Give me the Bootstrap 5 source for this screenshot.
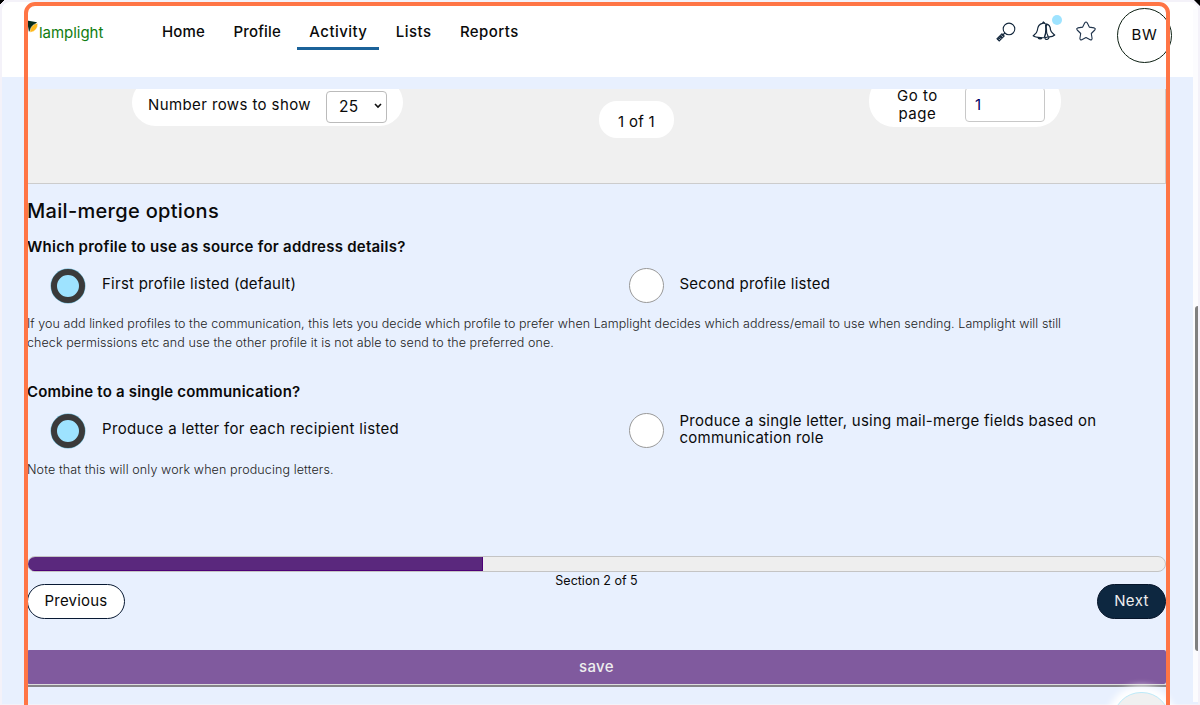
<!DOCTYPE html>
<html lang="en">
<head>
<meta charset="utf-8">
<meta name="viewport" content="width=device-width, initial-scale=1">
<title>Lamplight – Mail-merge options</title>
<link href="https://cdn.jsdelivr.net/npm/bootstrap@5.3.0/dist/css/bootstrap.min.css" rel="stylesheet">
<style>
html,body{height:100%;overflow:hidden}
body{font-family:Inter,"Open Sans",sans-serif;font-size:15px;line-height:17px;letter-spacing:.25px;color:#0a0a0a;background:linear-gradient(135deg,#000 3px,transparent 3.5px),linear-gradient(225deg,#000 4px,transparent 4.5px),#f4f2f9}
.shell{height:705px;padding:2px}
.app-window{height:702px;background:#e8f0fe;border-radius:8px 8px 0 0;overflow:hidden}
.topbar{height:75px;background:#fff}
.brand{margin-left:25px;width:123px;height:60px;color:#107c10;letter-spacing:-.04px;padding-top:1px}
.brand svg{margin:-9px -1px 0 0}
.topnav{gap:4.4px;padding-top:12px}
.topnav .nav-link{color:#0a0a0a;font-weight:500;padding:9px 12px 7px;height:36px;letter-spacing:.45px;border-bottom:3px solid transparent}
.topnav .nav-link.tight{letter-spacing:.17px}
.topnav .nav-link.active{border-color:#1b6299}
.tools{margin-right:26px}
.bell-wrap{margin:-1px 19px 0 16px;line-height:1}
.dot{position:absolute;width:10px;height:10px;border-radius:50%;background:#9ee3ff;right:-6px;top:-6px}
.avatar{width:55px;height:55px;margin:6px 0 0 20px;border:1.5px solid #0c1f12;letter-spacing:.6px;padding-bottom:3px}
.tools>svg,.bell-wrap{transform:translateY(-1px)}
.content{margin:12px 32px 0 25px}
.pager-panel{height:94.5px;margin-left:1px;background:#f0f0f0;border-bottom:1.5px solid #ccc;border-right:1px solid #ccc;overflow:hidden}
.pill{background:#fff;border-radius:25px}
.pill-rows{width:271px;height:47px;margin:-10px 0 0 104px;padding:8px 16px 0 16px;letter-spacing:.4px}
.pill-rows>span{margin-top:-5px}
.pill-count{width:75px;height:37px;margin:12px 0 0 196px;border-radius:18px;padding-top:3px;letter-spacing:.3px}
.pill-goto{width:192px;height:52px;margin:-14px 0 0 195px;padding:7px 16px 0 28px;letter-spacing:.5px;line-height:17.5px}
.rows-box{width:61px;height:32px;margin-top:1px;border:1px solid #bbb;border-radius:4px;padding:0 4px 2px 12px;background:#fff;font-size:15.5px}
.page-box{width:80px;height:35px;border:1.5px solid #c8c8c8;border-radius:4px;padding-left:9px;background:#fff;color:#000064}
h1{font-size:20px;line-height:24px;font-weight:500;letter-spacing:.31px;margin:15px 0 0}
h2{font-size:15px;line-height:18px;font-weight:600;letter-spacing:.25px;margin:0}
.q-one{margin-top:15px}
.q-two{margin-top:31px;letter-spacing:.19px}
.choices{margin-top:12px;padding-left:24px}
.choice{height:36px}
.choices>.choice+.choice{padding-left:20px}
.choice-text{margin:-4px 0 0 17px}
.q-wide{letter-spacing:.33px}
.ring{width:34px;height:34px;border-radius:50%;flex:none}
.ring.off{width:35px;height:35px;margin-right:-1px;border:1px solid #999;background:#fff}
.ring.on{border:6px solid #3a3a3a;background:#9ee3ff;box-shadow:0 0 0 .5px #69b7d3}
.hint{font-size:12.5px;line-height:19px;font-weight:300;letter-spacing:.055px;color:#222;white-space:nowrap}
.hint-one{margin-top:10px}
.hint-two{margin-top:11px;letter-spacing:.12px}
.hint-tail{letter-spacing:.09px}
.progress{height:16px;border-radius:8px;background:#eee;border:1px solid #c4c4c4;margin-top:77px}
.progress-bar{background:#5a287d;border-bottom:1px solid #4d0077;border-right:1px solid #4d0077}
.section-no{font-size:12.5px;line-height:12px;letter-spacing:0;height:12px;padding-top:3px}
.btn{font-size:15px;line-height:17px;height:35px;border-radius:18px;padding:0 0 1px;letter-spacing:.22px}
.btn-prev{width:98px;background:#fff;border:1.5px solid #081933;color:#0a0a0a}
.btn-next{width:69px;background:#0d2740;border:1px solid #06152a;color:#eee;letter-spacing:.4px}
.btn-save{height:34px;border-radius:2px;background:#805a9e;border:0;color:#eee;font-weight:500;letter-spacing:.37px;margin-top:31px;padding-top:1px}
.rule-under{height:3px;background:#858589;border-top:1px solid #ddd}
.scroll-track{position:absolute;right:2px;top:9px;width:5px;height:693px;background:#fcfcfe}
.scroll-thumb{position:absolute;right:0;top:297px;width:3px;height:345px;background:#808080;border-radius:3px 0 0 3px}
.fab{position:absolute;left:1113px;top:692px;width:57px;height:46px;border-radius:28px 28px 0 0;background:#f0f0f0;border:1.5px solid #bdeaf9;box-shadow:0 0 7px 6px #fff}
.outline-frame{position:absolute;left:24px;top:2px;width:1146px;height:720px;border:4px solid #ff7545;border-radius:11px;pointer-events:none}
</style>
</head>
<body>
<div class="shell position-relative overflow-hidden">
<div class="app-window d-flex flex-column">
  <header class="topbar d-flex align-items-start">
    <div class="brand d-flex align-items-center">
      <svg width="13" height="22" viewBox="0 0 13 22"><path d="M0 3.5L10 5.2 2 15z" fill="#062b1b"/><path d="M2.8 15.2C3.2 11 5.500 7 10.600 6.200c.8 4.200-2.800 9.200-7.800 9z" fill="#ffb81a" stroke="#fff" stroke-width=".5"/></svg>
      <span>lamplight</span>
    </div>
    <nav class="nav topnav flex-grow-1">
      <a class="nav-link tight" href="#">Home</a>
      <a class="nav-link tight" href="#">Profile</a>
      <a class="nav-link active" href="#">Activity</a>
      <a class="nav-link" href="#">Lists</a>
      <a class="nav-link" href="#">Reports</a>
    </nav>
    <div class="tools d-flex align-items-center">
      <svg width="20" height="20" viewBox="0 0 20 20" fill="none" stroke="#14283d" stroke-width="1.1"><circle cx="13" cy="6.900" r="5.800"/><path d="M8.800 11L6.800 13M6 11.800l2.200 2.200-5 5-2.200-2.200zM2.400 15.400l2.200 2.200M4 14l2 2M1.800 17.800l5.200-5"/></svg>
      <span class="position-relative bell-wrap">
        <svg width="24" height="21" viewBox="0 0 24 21" fill="none" stroke="#14283d" stroke-width="1.2" stroke-linejoin="round"><path d="M10.500 2.400C6.400 3 5.600 6.500 5.300 9.500 5 12 3.300 13 1.200 14.800c2.600 2 12 2.700 15.100 1M10.500 2.400c2.200-.5 3.800.6 4.500 2.500M14.200 2.800c3.200.5 4.200 3.400 4.300 6 .1 2.400 2.100 3.500 4.200 5.200-1.600 1.500-4 2-6.400 1.800M14 3c-1.200 2 .8 4.200.5 7.100-.1 2 .9 3.700 1.800 5.700M10.500 2.300l.8-1.300 1.500 1.300M6 16.500c.3 1.800 3.400 2 4 .3M12.800 17c.9 2.400 4 1.800 4.300-1"/><path d="M14.200 4c-.8 4 .8 6.500-1.700 12.200" stroke-width="1.500"/></svg>
        <i class="dot"></i>
      </span>
      <svg width="22" height="21" viewBox="0 0 22 21" fill="none" stroke="#20344c" stroke-width="1.100" stroke-linejoin="round"><path d="M9.800 1.800q1.200-1.600 2.400 0l2.100 4.300 4.900.8q1.800.7.6 2.100L16.300 12.500l.8 5q-.2 1.800-1.900 1.200L11 16.500l-4.200 2.200q-1.700.6-1.900-1.200l.8-5L2.200 9q-1.200-1.400.6-2.100l4.900-.8z"/></svg>
      <div class="avatar rounded-circle d-flex align-items-center justify-content-center">BW</div>
    </div>
  </header>
  <main class="content">
    <section class="pager-panel d-flex align-items-start">
      <div class="pill pill-rows d-flex justify-content-between align-items-center"><span>Number rows to show</span>
        <div class="rows-box d-flex align-items-center justify-content-between"><span>25</span><svg width="8" height="6" viewBox="0 0 8 6" fill="none" stroke="#111" stroke-width="1.6"><path d="M1 1l3 3 3-3"/></svg></div></div>
      <div class="pill pill-count d-flex align-items-center justify-content-center">1 of 1</div>
      <div class="pill pill-goto d-flex justify-content-between align-items-center"><span class="text-center">Go to<br>page</span>
        <div class="page-box d-flex align-items-center">1</div></div>
    </section>
    <h1>Mail-merge options</h1>
    <h2 class="q-one">Which profile to use as source for address details?</h2>
    <div class="row gx-0 choices">
      <div class="col-6 d-flex align-items-center choice"><span class="ring on"></span><span class="choice-text">First profile listed (default)</span></div>
      <div class="col-6 d-flex align-items-center choice"><span class="ring off"></span><span class="choice-text">Second profile listed</span></div>
    </div>
    <p class="hint hint-one mb-0">If you add linked profiles to the communication, this lets you decide which profile to prefer when Lamplight decides which address/email to use when sending. Lamplight will still<br><span class="hint-tail">check permissions etc and use the other profile it is not able to send to the preferred one.</span></p>
    <h2 class="q-two">Combine to a single communication?</h2>
    <div class="row gx-0 choices">
      <div class="col-6 d-flex align-items-center choice"><span class="ring on"></span><span class="choice-text q-wide">Produce a letter for each recipient listed</span></div>
      <div class="col-6 d-flex align-items-center choice"><span class="ring off"></span><span class="choice-text">Produce a single letter, using mail-merge fields based on<br>communication role</span></div>
    </div>
    <p class="hint hint-two mb-0">Note that this will only work when producing letters.</p>
    <div class="progress"><div class="progress-bar" style="width:40%"></div></div>
    <div class="section-no text-center">Section 2 of 5</div>
    <div class="d-flex justify-content-between"><button class="btn btn-prev">Previous</button><button class="btn btn-next">Next</button></div>
    <button class="btn btn-save w-100 d-block">save</button>
    <div class="rule-under"></div>
  </main>
</div>
<div class="scroll-track"><div class="scroll-thumb"></div></div>
<div class="fab"></div>
<div class="outline-frame"></div>
</div>
<script src="https://cdn.jsdelivr.net/npm/bootstrap@5.3.0/dist/js/bootstrap.bundle.min.js"></script>
</body>
</html>
